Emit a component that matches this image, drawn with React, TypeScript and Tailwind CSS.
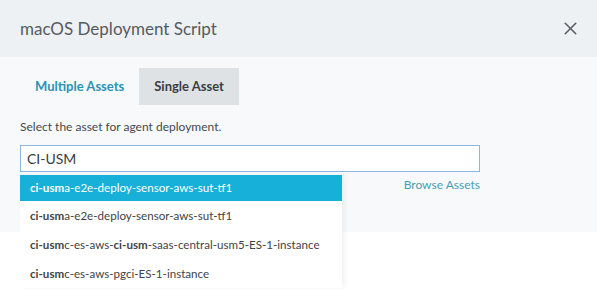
import { X } from "lucide-react";

const options = [
  { rest: "a-e2e-deploy-sensor-aws-sut-tf1", active: true },
  { rest: "a-e2e-deploy-sensor-aws-sut-tf1" },
  { rest: "c-es-aws-", extra: "ci-usm", tail: "-saas-central-usm5-ES-1-instance" },
  { rest: "c-es-aws-pgci-ES-1-instance" },
];

export default function App() {
  return (
    <div className="w-[597px] h-[289px] bg-white overflow-hidden font-['Lato','Open_Sans',sans-serif]">
      <div className="h-[57px] bg-[#eef1f4] flex items-center justify-between pl-5 pr-4">
        <h1 className="text-[17px] text-[#555a60]">macOS Deployment Script</h1>
        <X className="w-[21px] h-[21px] text-[#5a5e63]" strokeWidth={1.8} />
      </div>
      <div className="h-[175px] bg-[#f7f9fb] px-5 pt-[11px]">
        <div className="flex items-stretch h-[37px]">
          <button className="px-[15px] text-[13px] font-bold text-[#2b93b5]">Multiple Assets</button>
          <button className="px-[15px] text-[13px] font-bold text-[#3a3d40] bg-[#dfe2e5]">Single Asset</button>
        </div>
        <p className="mt-[13px] text-[12px] text-[#45494d]">Select the asset for agent deployment.</p>
        <div className="relative mt-[9px] w-[460px]">
          <div className="h-[27px] border border-[#8ab8e2] bg-white flex items-center px-[6px] text-[14px] text-[#3a3d40]">
            CI-USM
          </div>
          <div className="flex justify-end mt-[4px]">
            <span className="text-[12px] text-[#4a9db8]">Browse Assets</span>
          </div>
          <div className="absolute left-0 top-[30px] w-[322px] bg-white shadow-[3px_0_5px_rgba(0,0,0,0.05)]">
            {options.map((o, i) => (
              <div
                key={i}
                className={
                  o.active
                    ? "h-[26px] flex items-center px-[10px] text-[11.6px] bg-[#17b0d8] text-white"
                    : "h-[29px] flex items-center px-[10px] text-[11.6px] text-[#3f4347]"
                }
              >
                <span className="font-bold">ci-usm</span>
                <span>{o.rest}</span>
                {o.extra && <span className="font-bold">{o.extra}</span>}
                {o.tail && <span>{o.tail}</span>}
              </div>
            ))}
          </div>
        </div>
      </div>
    </div>
  );
}
